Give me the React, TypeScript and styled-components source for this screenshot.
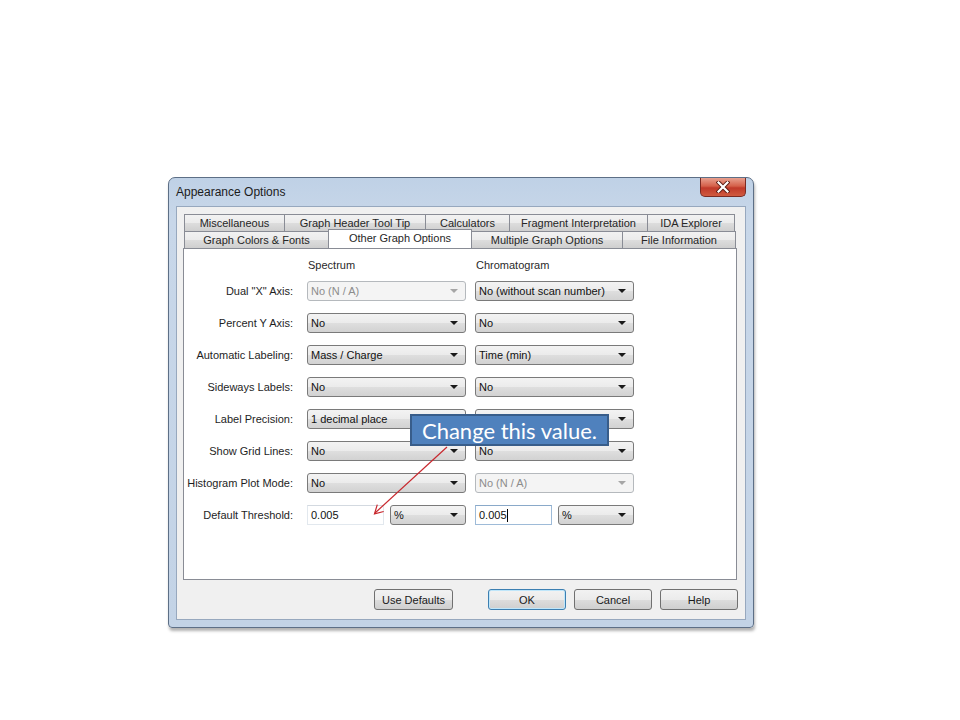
import React from "react";
import styled, { createGlobalStyle, css } from "styled-components";

const GlobalStyle = createGlobalStyle`
  html, body {
    margin: 0;
    padding: 0;
    background: #ffffff;
    font-family: "Liberation Sans", Arial, sans-serif;
  }
`;

const Page = styled.div`
  position: relative;
  width: 960px;
  height: 720px;
  box-sizing: border-box;
  padding: 177px 0 0 168px;
`;

const Window = styled.div`
  width: 586px;
  box-sizing: border-box;
  border: 1px solid #5d6f86;
  border-radius: 7px 7px 4px 4px;
  background: linear-gradient(to bottom, #bfd1e6 0px, #c8d7e9 40px, #c3d3e6 100%);
  padding: 0 7px 7px 7px;
  display: flex;
  flex-direction: column;
  box-shadow: 1px 3px 3px rgba(0, 0, 0, 0.3);
`;

const TitleBar = styled.div`
  height: 28px;
  display: flex;
  align-items: flex-start;
  justify-content: space-between;
`;

const Title = styled.div`
  font-size: 12px;
  color: #1b1b1b;
  line-height: 28px;
`;

const CloseButton = styled.div`
  width: 46px;
  height: 19px;
  box-sizing: border-box;
  border: 1px solid #7a2a22;
  border-top: none;
  border-radius: 0 0 5px 5px;
  background: linear-gradient(to bottom, #e8a08f 0%, #d5604a 45%, #c0392a 55%, #d05a3f 100%);
  display: flex;
  align-items: center;
  justify-content: center;
`;

const Client = styled.div`
  width: 570px;
  height: 414px;
  box-sizing: border-box;
  border: 1px solid #97a8be;
  background: #f0f0f0;
  padding: 7px 8px 0 6px;
  display: flex;
  flex-direction: column;
`;

const TabRow = styled.div`
  display: flex;
  height: 17px;
  margin-left: 1px;
  width: 551px;
`;

const Tab = styled.div<{ $w: number; $active?: boolean }>`
  width: ${(p) => p.$w}px;
  box-sizing: border-box;
  border: 1px solid #898c95;
  border-bottom: none;
  margin-right: -1px;
  background: linear-gradient(to bottom, #f2f2f2 0%, #ebebeb 50%, #dddddd 51%, #cfcfcf 100%);
  font-size: 11px;
  color: #262626;
  display: flex;
  align-items: center;
  justify-content: center;
  white-space: nowrap;
  ${(p) =>
    p.$active &&
    css`
      background: #ffffff;
      height: 19px;
      margin-top: -2px;
      position: relative;
      z-index: 1;
      align-items: flex-start;
      padding-top: 2px;
    `}
`;

const Panel = styled.div`
  width: 554px;
  height: 332px;
  box-sizing: border-box;
  border: 1px solid #898c95;
  background: #ffffff;
  padding-top: 8px;
`;

const Grid = styled.div`
  display: grid;
  grid-template-columns: 114px 159px 159px;
  column-gap: 9px;
  align-items: center;
`;

const HeaderRow = styled(Grid)`
  height: 16px;
  margin-bottom: 8px;
`;

const ColHeader = styled.div`
  font-size: 11px;
  color: #2a2a2a;
  padding-left: 1px;
`;

const Rows = styled.div`
  display: flex;
  flex-direction: column;
  gap: 12px;
`;

const FieldRow = styled(Grid)`
  height: 20px;
`;

const Label = styled.div`
  font-size: 11px;
  color: #1e1e1e;
  text-align: right;
  padding-right: 5px;
  white-space: nowrap;
`;

const Combo = styled.div<{ $disabled?: boolean; $w?: number }>`
  width: ${(p) => p.$w ?? 159}px;
  height: 20px;
  box-sizing: border-box;
  border: 1px solid #7a7a7a;
  border-radius: 3px;
  background: linear-gradient(to bottom, #f3f3f3 0%, #ebebeb 50%, #dedede 51%, #d2d2d2 100%);
  display: flex;
  align-items: center;
  justify-content: space-between;
  padding: 0 7px 0 3px;
  font-size: 11px;
  color: #111111;
  white-space: nowrap;
  ${(p) =>
    p.$disabled &&
    css`
      border-color: #b5b9bd;
      background: #f4f4f4;
      color: #8c8c8c;
    `}
`;

const Arrow = styled.span<{ $disabled?: boolean }>`
  width: 0;
  height: 0;
  border-left: 4px solid transparent;
  border-right: 4px solid transparent;
  border-top: 4px solid ${(p) => (p.$disabled ? "#a6a6a6" : "#1a1a1a")};
`;

const Pair = styled.div`
  display: flex;
  gap: 6px;
  width: 159px;
`;

const TextBox = styled.div<{ $focused?: boolean }>`
  width: 77px;
  height: 20px;
  box-sizing: border-box;
  border: 1px solid ${(p) => (p.$focused ? "#9ebbd8" : "#e2e8ee")};
  border-top-color: ${(p) => (p.$focused ? "#8aa9c9" : "#d3d9e0")};
  background: #ffffff;
  font-size: 11px;
  color: #111111;
  display: flex;
  align-items: center;
  padding-left: 3px;
`;

const Caret = styled.span`
  display: inline-block;
  width: 1px;
  height: 13px;
  background: #000000;
`;

const ButtonRow = styled.div`
  display: flex;
  justify-content: flex-end;
  gap: 8px;
  margin-top: 9px;
  margin-right: -1px;
`;

const Button = styled.div<{ $default?: boolean; $w?: number; $gapAfter?: number }>`
  width: ${(p) => p.$w ?? 78}px;
  height: 21px;
  box-sizing: border-box;
  border: 1px solid #707070;
  border-radius: 3px;
  background: linear-gradient(to bottom, #f2f2f2 0%, #ebebeb 50%, #dddddd 51%, #cfcfcf 100%);
  font-size: 11px;
  color: #1a1a1a;
  display: flex;
  align-items: center;
  justify-content: center;
  margin-right: ${(p) => p.$gapAfter ?? 0}px;
  ${(p) =>
    p.$default &&
    css`
      border-color: #3c7fb1;
      box-shadow: inset 0 0 0 1px #bfe6fa;
    `}
`;

const Callout = styled.div`
  position: absolute;
  left: 410px;
  top: 414px;
  width: 199px;
  height: 32px;
  box-sizing: border-box;
  background: #4f81bd;
  border: 2px solid #385d8a;
  color: #ffffff;
  font-family: Lato, "Open Sans", sans-serif;
  font-size: 22px;
  display: flex;
  align-items: center;
  justify-content: center;
  z-index: 3;
`;

const Overlay = styled.svg`
  position: absolute;
  left: 0;
  top: 0;
  width: 960px;
  height: 720px;
  pointer-events: none;
  z-index: 2;
`;

type Field = {
  label: string;
  spectrum: string;
  chrom: string;
  specDisabled?: boolean;
  chromDisabled?: boolean;
};

const fields: Field[] = [
  { label: 'Dual "X" Axis:', spectrum: "No (N / A)", chrom: "No (without scan number)", specDisabled: true },
  { label: "Percent Y Axis:", spectrum: "No", chrom: "No" },
  { label: "Automatic Labeling:", spectrum: "Mass / Charge", chrom: "Time (min)" },
  { label: "Sideways Labels:", spectrum: "No", chrom: "No" },
  // chromatogram value is hidden behind the callout in the reference
  { label: "Label Precision:", spectrum: "1 decimal place", chrom: "" },
  { label: "Show Grid Lines:", spectrum: "No", chrom: "No" },
  { label: "Histogram Plot Mode:", spectrum: "No", chrom: "No (N / A)", chromDisabled: true },
];

const topTabs = [
  { name: "Miscellaneous", w: 101 },
  { name: "Graph Header Tool Tip", w: 142 },
  { name: "Calculators", w: 85 },
  { name: "Fragment Interpretation", w: 139 },
  { name: "IDA Explorer", w: 88 },
];

const bottomTabs = [
  { name: "Graph Colors & Fonts", w: 145 },
  { name: "Other Graph Options", w: 144, active: true },
  { name: "Multiple Graph Options", w: 152 },
  { name: "File Information", w: 114 },
];

const ComboBox = ({ value, disabled, w }: { value: string; disabled?: boolean; w?: number }) => (
  <Combo $disabled={disabled} $w={w}>
    <span>{value}</span>
    <Arrow $disabled={disabled} />
  </Combo>
);

export default function App() {
  return (
    <Page>
      <GlobalStyle />
      <Window>
        <TitleBar>
          <Title>Appearance Options</Title>
          <CloseButton>
            <svg width="14" height="12" viewBox="0 0 14 12">
              <path d="M2.5 1.5 L11.5 10.5 M11.5 1.5 L2.5 10.5" stroke="#5a1a12" strokeWidth="4" strokeLinecap="square" />
              <path d="M2.5 1.5 L11.5 10.5 M11.5 1.5 L2.5 10.5" stroke="#ffffff" strokeWidth="2.2" strokeLinecap="square" />
            </svg>
          </CloseButton>
        </TitleBar>
        <Client>
          <TabRow>
            {topTabs.map((t) => (
              <Tab key={t.name} $w={t.w}>
                {t.name}
              </Tab>
            ))}
          </TabRow>
          <TabRow>
            {bottomTabs.map((t) => (
              <Tab key={t.name} $w={t.w} $active={t.active}>
                {t.name}
              </Tab>
            ))}
          </TabRow>
          <Panel>
            <HeaderRow>
              <span />
              <ColHeader>Spectrum</ColHeader>
              <ColHeader>Chromatogram</ColHeader>
            </HeaderRow>
            <Rows>
              {fields.map((f) => (
                <FieldRow key={f.label}>
                  <Label>{f.label}</Label>
                  <ComboBox value={f.spectrum} disabled={f.specDisabled} />
                  <ComboBox value={f.chrom} disabled={f.chromDisabled} />
                </FieldRow>
              ))}
              <FieldRow>
                <Label>Default Threshold:</Label>
                <Pair>
                  <TextBox>0.005</TextBox>
                  <ComboBox value="%" w={76} />
                </Pair>
                <Pair>
                  <TextBox $focused>
                    0.005
                    <Caret />
                  </TextBox>
                  <ComboBox value="%" w={76} />
                </Pair>
              </FieldRow>
            </Rows>
          </Panel>
          <ButtonRow>
            <Button $w={79} $gapAfter={27}>
              Use Defaults
            </Button>
            <Button $default>OK</Button>
            <Button>Cancel</Button>
            <Button>Help</Button>
          </ButtonRow>
        </Client>
      </Window>
      <Callout>Change this value.</Callout>
      <Overlay viewBox="0 0 960 720">
        <path d="M447 447 L375 513" stroke="#c8282e" strokeWidth="1.2" fill="none" />
        <path d="M383.7 511.5 L374.5 513.8 L377.3 504.6" stroke="#c8282e" strokeWidth="1.2" fill="none" />
      </Overlay>
    </Page>
  );
}
